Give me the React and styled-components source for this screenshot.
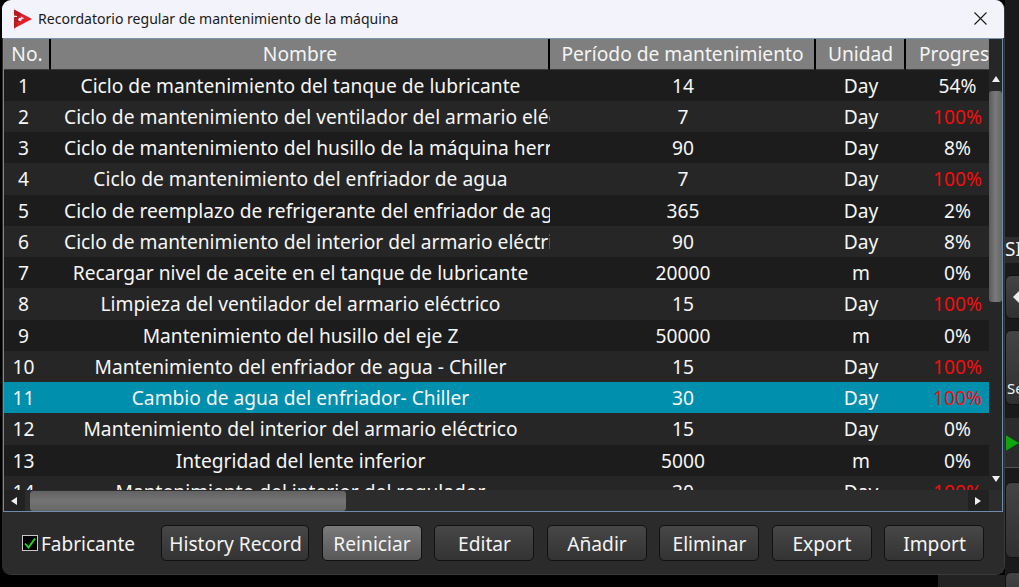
import React from 'react';
import styled, { createGlobalStyle } from 'styled-components';

const GlobalStyle = createGlobalStyle`
  html, body { margin: 0; padding: 0; background: #000; overflow: hidden; }
  * { box-sizing: border-box; }
`;

const columns = '47px 499px 266px 90px 83px';

const rows = [
  ['1', 'Ciclo de mantenimiento del tanque de lubricante', '14', 'Day', '54%'],
  ['2', 'Ciclo de mantenimiento del ventilador del armario eléctrico', '7', 'Day', '100%'],
  ['3', 'Ciclo de mantenimiento del husillo de la máquina herramienta', '90', 'Day', '8%'],
  ['4', 'Ciclo de mantenimiento del enfriador de agua', '7', 'Day', '100%'],
  ['5', 'Ciclo de reemplazo de refrigerante del enfriador de agua', '365', 'Day', '2%'],
  ['6', 'Ciclo de mantenimiento del interior del armario eléctrico', '90', 'Day', '8%'],
  ['7', 'Recargar nivel de aceite en el tanque de lubricante', '20000', 'm', '0%'],
  ['8', 'Limpieza del ventilador del armario eléctrico', '15', 'Day', '100%'],
  ['9', 'Mantenimiento del husillo del eje Z', '50000', 'm', '0%'],
  ['10', 'Mantenimiento del enfriador de agua - Chiller', '15', 'Day', '100%'],
  ['11', 'Cambio de agua del enfriador- Chiller', '30', 'Day', '100%'],
  ['12', 'Mantenimiento del interior del armario eléctrico', '15', 'Day', '0%'],
  ['13', 'Integridad del lente inferior', '5000', 'm', '0%'],
  ['14', 'Mantenimiento del interior del regulador', '30', 'Day', '100%'],
];

const buttons = ['History Record', 'Reiniciar', 'Editar', 'Añadir', 'Eliminar', 'Export', 'Import'];

const Page = styled.div`
  width: 1019px;
  height: 587px;
  display: flex;
  font-family: "Noto Sans", sans-serif;
  color: #f4f4f4;
  overflow: hidden;
`;

const Desktop = styled.div`
  width: 1005px;
  display: flex;
  flex-direction: column;
  background: #000;
`;

const Window = styled.div`
  width: 1003px;
  height: 575px;
  margin-left: 2px;
  background: #2b2b2b;
  border-radius: 9px;
  border-right: 1px solid #3a3a3a;
  border-bottom: 1px solid #3a3a3a;
  overflow: hidden;
  display: flex;
  flex-direction: column;
`;

const TitleBar = styled.div`
  height: 38px;
  flex: none;
  background: #f2f3fb;
  color: #1a1a1a;
  display: flex;
  align-items: center;
  padding: 0 0 1px 12px;
  font-size: 14.05px;
`;

const TitleText = styled.span`
  margin-left: 6px;
  flex: 1;
`;

const CloseButton = styled.div`
  width: 38px;
  height: 38px;
  margin-right: 5px;
  display: flex;
  align-items: center;
  justify-content: center;
`;

const Frame = styled.div`
  margin-left: 1px;
  width: 1000px;
  height: 474px;
  flex: none;
  border: 1px solid #6d8cb0;
  border-top-color: #7d93ad;
  background: #242424;
  display: grid;
  grid-template-columns: 985px 13px;
  grid-template-rows: 451px 21px;
`;

const TableArea = styled.div`
  overflow: hidden;
`;

const Header = styled.div`
  display: grid;
  grid-template-columns: ${columns};
  height: 30.7px;
`;

const HeaderCell = styled.div`
  background: #7f7f7f;
  border-right: 2px solid #000;
  border-bottom: 1px solid #3c3c3c;
  font-size: 19.2px;
  line-height: 30px;
  text-align: center;
  white-space: nowrap;
  overflow: hidden;
  padding-left: 1px;
  &:last-child { border-right: none; padding-left: 13px; text-align: left; }
`;

const Row = styled.div`
  display: grid;
  grid-template-columns: ${columns};
  height: 31.25px;
  background: ${p => (p.$selected ? '#008fad' : p.$even ? '#262626' : '#1c1c1c')};
`;

const Cell = styled.div`
  font-size: 19.2px;
  line-height: 32px;
  text-align: center;
  white-space: nowrap;
  overflow: hidden;
  padding: 0 13px;
  color: ${p => (p.$alert ? '#f50d0d' : '#f6f6f6')};
`;

const NumberCell = styled(Cell)`
  padding: 0 8px 0 0;
`;

const ProgressCell = styled(Cell)`
  padding: 0 0 0 20px;
`;

const VerticalBar = styled.div`
  background: #262626;
  display: flex;
  flex-direction: column;
  align-items: center;
  padding-top: 31px;
`;

const ArrowBox = styled.div`
  width: 13px;
  height: 20px;
  flex: none;
  display: flex;
  align-items: center;
  justify-content: center;
`;

const VerticalThumb = styled.div`
  width: 13px;
  height: 211px;
  margin-top: 1px;
  border-radius: 3px;
  background: linear-gradient(90deg, #5a5a5a, #7a7a7a 50%, #666);
`;

const Spacer = styled.div`
  flex: 1;
`;

const HorizontalBar = styled.div`
  background: #2c2c2c;
  display: flex;
  align-items: center;
`;

const HorizontalThumb = styled.div`
  width: 316px;
  height: 20px;
  margin-left: 5px;
  border-radius: 3px;
  background: linear-gradient(180deg, #626262, #747474 50%, #666);
`;

const SideArrow = styled.div`
  width: 21px;
  height: 21px;
  background: #222;
  display: flex;
  align-items: center;
  justify-content: center;
`;

const Corner = styled.div`
  background: #2c2c2c;
`;

const Footer = styled.div`
  flex: 1;
  display: flex;
  align-items: center;
  padding: 0 0 1px 20px;
`;

const CheckWrap = styled.label`
  display: flex;
  align-items: center;
  width: 139px;
  font-size: 19px;
`;

const CheckLabel = styled.span`
  padding-top: 2px;
`;

const CheckBox = styled.span`
  width: 16px;
  height: 16px;
  background: #000;
  border: 1px solid #c8c8c8;
  margin-right: 3px;
  display: flex;
  align-items: center;
  justify-content: center;
`;

const ButtonRow = styled.div`
  display: flex;
  gap: 12.5px;
`;

const Button = styled.button`
  width: ${p => (p.$wide ? '148px' : '100px')};
  height: 36px;
  border: 1px solid #111;
  border-radius: 5px;
  padding: 1px 0 0 1px;
  font-family: inherit;
  font-size: 19.2px;
  color: #f4f4f4;
  background: ${p => (p.$active
    ? 'linear-gradient(180deg, #7a7a7a, #585858)'
    : 'linear-gradient(180deg, #474747, #333)')};
`;

const Below = styled.div`
  flex: 1;
  display: flex;
  justify-content: flex-end;
`;

const BelowDark = styled.div`
  width: 67px;
  background: #222;
`;

const Strip = styled.div`
  flex: 1;
  background: #1a1a1a;
  overflow: hidden;
  padding-top: 237px;
  display: flex;
  flex-direction: column;
`;

const StripLabel = styled.div`
  height: 26px;
  flex: none;
  background: #2c2c2c;
  font-size: 19px;
  line-height: 24px;
  white-space: nowrap;
  margin-bottom: 12px;
`;

const StripButton = styled.div`
  width: 40px;
  height: ${p => p.$h}px;
  flex: none;
  margin-bottom: ${p => p.$gap}px;
  background: linear-gradient(180deg, #444, #303030);
  border: 1px solid #111;
  border-radius: 6px;
  font-size: 15px;
  display: flex;
  align-items: ${p => (p.$end ? 'flex-end' : 'center')};
  padding: 0 0 ${p => (p.$end ? 6 : 0)}px 1px;
  white-space: nowrap;
`;

const PlayBar = styled.div`
  height: 50px;
  flex: none;
  background: #2b2b2b;
  border-bottom: 1px solid #555;
  margin-bottom: 14px;
  display: flex;
  align-items: center;
  padding: 0 0 0 1px;
`;

const Logo = () => (
  <svg width="18" height="20" viewBox="2 0 18 20">
    <path d="M2 0.5 L20 10 L2 19.5 Z" fill="#e3202a" />
    <path d="M2 0.5 L8.5 4 L8.5 6.5 L5 7.5 L8 10 L8 13 L5 13 L5 16.5 L2 19.5 Z" fill="#b51b20" />
    <circle cx="8" cy="10.5" r="1.7" fill="#f2f3fb" />
    <path d="M2 6.5 L5 7 L5 8 L2 8 Z" fill="#f2f3fb" />
    <path d="M9 7.5 L12.5 9.5 L9 10 Z" fill="#f2f3fb" />
  </svg>
);

const Triangle = ({ dir }) => {
  const shapes = {
    up: '0,6 4,0 8,6',
    down: '0,0 8,0 4,6',
    left: '6,0 6,8 0,4',
    right: '0,0 6,4 0,8',
  };
  return (
    <svg width="8" height="8" viewBox="0 0 8 8">
      <polygon points={shapes[dir]} fill="#f0f0f0" />
    </svg>
  );
};

export default function App() {
  return (
    <Page>
      <GlobalStyle />
      <Desktop>
        <Window>
          <TitleBar>
            <Logo />
            <TitleText>Recordatorio regular de mantenimiento de la máquina</TitleText>
            <CloseButton>
              <svg width="13" height="13" viewBox="0 0 13 13">
                <path d="M0.5 0.5 L12.5 12.5 M12.5 0.5 L0.5 12.5" stroke="#1a1a1a" strokeWidth="1.1" />
              </svg>
            </CloseButton>
          </TitleBar>
          <Frame>
            <TableArea>
              <Header>
                <HeaderCell>No.</HeaderCell>
                <HeaderCell>Nombre</HeaderCell>
                <HeaderCell>Período de mantenimiento</HeaderCell>
                <HeaderCell>Unidad</HeaderCell>
                <HeaderCell>Progress</HeaderCell>
              </Header>
              {rows.map((r, i) => (
                <Row key={r[0]} $even={i % 2 === 1} $selected={r[0] === '11'}>
                  <NumberCell>{r[0]}</NumberCell>
                  <Cell>{r[1]}</Cell>
                  <Cell>{r[2]}</Cell>
                  <Cell>{r[3]}</Cell>
                  <ProgressCell $alert={r[4] === '100%'}>{r[4]}</ProgressCell>
                </Row>
              ))}
            </TableArea>
            <VerticalBar>
              <ArrowBox><Triangle dir="up" /></ArrowBox>
              <VerticalThumb />
              <Spacer />
              <ArrowBox><Triangle dir="down" /></ArrowBox>
            </VerticalBar>
            <HorizontalBar>
              <SideArrow><Triangle dir="left" /></SideArrow>
              <HorizontalThumb />
              <Spacer />
              <SideArrow><Triangle dir="right" /></SideArrow>
            </HorizontalBar>
            <Corner />
          </Frame>
          <Footer>
            <CheckWrap>
              <CheckBox>
                <svg width="14" height="14" viewBox="0 0 14 14">
                  <path d="M2 7.5 L5.5 11.5 L12 2.5" fill="none" stroke="#1fe01f" strokeWidth="1.8" />
                </svg>
              </CheckBox>
              <CheckLabel>Fabricante</CheckLabel>
            </CheckWrap>
            <ButtonRow>
              {buttons.map((b, i) => (
                <Button key={b} $wide={i === 0} $active={b === 'Reiniciar'}>{b}</Button>
              ))}
            </ButtonRow>
          </Footer>
        </Window>
        <Below><BelowDark /></Below>
      </Desktop>
      <Strip>
        <StripLabel>SI</StripLabel>
        <StripButton $h={44} $gap={11}>
          <svg width="24" height="16" viewBox="0 0 24 16"><polygon points="6,8 14,0 22,8 14,16" fill="#eee" /></svg>
        </StripButton>
        <StripButton $h={75} $gap={13} $end>Se</StripButton>
        <PlayBar>
          <svg width="15" height="18" viewBox="0 0 15 18"><polygon points="0,0 15,9 0,18" fill="#0fa50f" /></svg>
        </PlayBar>
        <StripButton $h={76} $gap={14} />
        <StripButton $h={40} $gap={0} />
      </Strip>
    </Page>
  );
}
